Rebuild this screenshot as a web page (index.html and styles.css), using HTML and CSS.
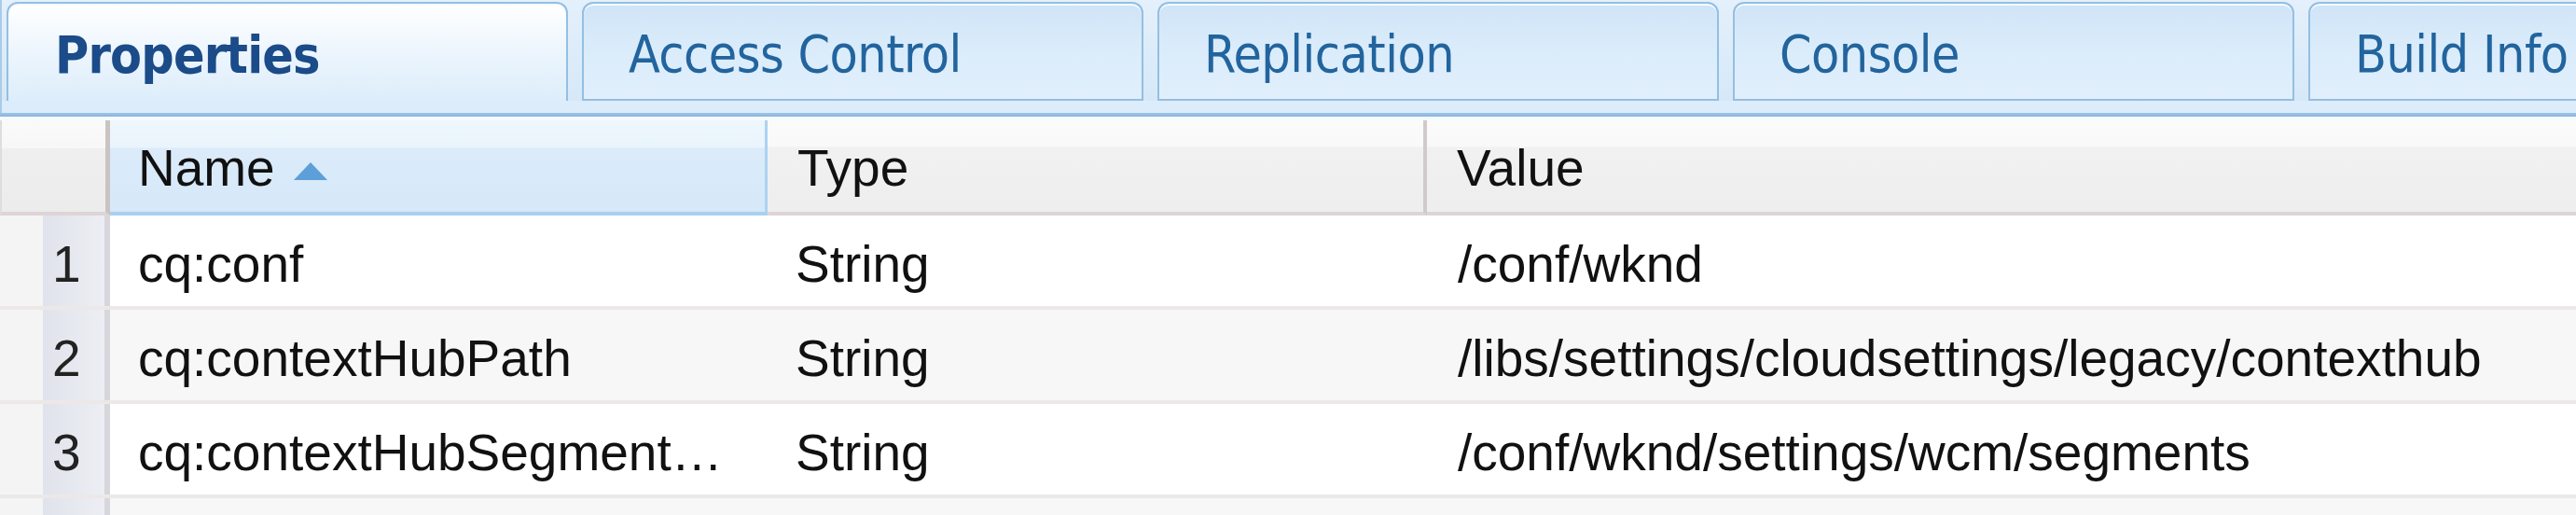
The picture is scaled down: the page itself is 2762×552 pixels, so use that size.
FILE: index.html
```html
<!DOCTYPE html>
<html>
<head>
<meta charset="utf-8">
<link rel="stylesheet" href="styles.css">
</head>
<body>
<div class="app">
  <div class="tabbar">
    <div class="tab active">Properties</div>
    <div class="tab">Access Control</div>
    <div class="tab">Replication</div>
    <div class="tab">Console</div>
    <div class="tab">Build Info</div>
  </div>
  <div class="band"></div>
  <div class="rule"></div>
  <div class="grid">
    <div class="hrow">
      <div class="hcell hnum"></div>
      <div class="hcell sorted">Name<span class="arrow"></span></div>
      <div class="hcell sep">Type</div>
      <div class="hcell">Value</div>
    </div>
    <div class="row">
      <div class="cell num">1</div>
      <div class="cell">cq:conf</div>
      <div class="cell">String</div>
      <div class="cell val">/conf/wknd</div>
    </div>
    <div class="row alt">
      <div class="cell num">2</div>
      <div class="cell">cq:contextHubPath</div>
      <div class="cell">String</div>
      <div class="cell val">/libs/settings/cloudsettings/legacy/contexthub</div>
    </div>
    <div class="row">
      <div class="cell num">3</div>
      <div class="cell">cq:contextHubSegment…</div>
      <div class="cell">String</div>
      <div class="cell val">/conf/wknd/settings/wcm/segments</div>
    </div>
    <div class="row alt">
      <div class="cell num"></div>
      <div class="cell"></div>
      <div class="cell"></div>
      <div class="cell val"></div>
    </div>
  </div>
</div>
</body>
</html>
```

FILE: styles.css
```css
html, body {
  margin: 0;
  padding: 0;
  background: #ffffff;
}

.app {
  width: 2762px;
  height: 552px;
  overflow: hidden;
}

.tabbar {
  display: flex;
  gap: 15px;
  padding: 2px 0 0 5px;
  height: 108px;
  box-sizing: border-box;
  background: linear-gradient(#e4f0fb, #d6e8f8);
  border-left: 2px solid #a9cbe8;
  overflow: hidden;
}

.tab {
  flex: 0 0 602px;
  box-sizing: border-box;
  height: 106px;
  border: 2px solid #94bfe3;
  border-radius: 12px 12px 0 0;
  background: linear-gradient(#cfe4f7 0%, #d9ebfa 40%, #e1effc 100%);
  padding-left: 48px;
  padding-top: 5px;
  display: flex;
  align-items: center;
  font-family: "DejaVu Sans Condensed", "DejaVu Sans", sans-serif;
  font-stretch: condensed;
  font-size: 55px;
  letter-spacing: -0.5px;
  color: #22649e;
  box-shadow: inset 0 2px 0 #f4faff;
}

.tab.active {
  height: 108px;
  border-bottom: none;
  background: linear-gradient(#ffffff 0%, #eef6fd 45%, #dcedfb 100%);
  color: #1b4b88;
  font-weight: bold;
  letter-spacing: -0.8px;
  padding-left: 50px;
  padding-top: 3px;
}

.band {
  height: 13px;
  background: #dcecfa;
  border-left: 2px solid #a9cbe8;
}

.rule {
  height: 4px;
  background: linear-gradient(#9ec6e8, #86b4dc);
  border-bottom: 4px solid #f6fafd;
}

.grid {
  font-family: "Liberation Sans", Arial, sans-serif;
  font-size: 55px;
  color: #111111;
}

.hrow,
.row {
  display: grid;
  grid-template-columns: 118px 705px 707px 1fr;
}

.hrow {
  height: 102px;
}

.hcell {
  box-sizing: border-box;
  display: flex;
  align-items: center;
  padding-left: 32px;
  padding-top: 4px;
  background: linear-gradient(#fbfbfb 0%, #f9f9f9 28%, #f1f1f1 30%, #eeeeee 92%);
  border-bottom: 4px solid #ddd5d5;
}

.hcell.hnum {
  padding: 0;
  background: linear-gradient(#fafafa 0%, #f7f7f7 30%, #efefef 31%, #ececec 100%);
  border-right: 5px solid #cbc3c3;
  border-left: 2px solid #e0dcdc;
}

.hcell.sorted {
  background: linear-gradient(#eef7fd 0%, #eaf4fc 29%, #dbebfa 31%, #d6e8f9 100%);
  border-right: 3px solid #acd2f1;
  border-bottom: 4px solid #a9d0f0;
  padding-left: 30px;
}

.hcell.sep {
  border-right: 4px solid #d2caca;
}

.arrow {
  width: 0;
  height: 0;
  margin-left: 20px;
  margin-top: 6px;
  border-left: 18px solid transparent;
  border-right: 18px solid transparent;
  border-bottom: 19px solid #5d9fd8;
}

.row {
  height: 101px;
  background: #ffffff;
}

.row.alt {
  background: #f7f7f7;
}

.cell {
  box-sizing: border-box;
  display: flex;
  align-items: center;
  padding-left: 30px;
  padding-top: 6px;
  white-space: nowrap;
  overflow: hidden;
  border-bottom: 4px solid #ece8e8;
}

.cell.val {
  padding-left: 33px;
}

.cell.num {
  padding-left: 56px;
  color: #222222;
  background: linear-gradient(to right, #f4f4f4 0, #f4f4f4 46px, #e0e3eb 46px, #eceef3 112px, #d6d6dc 112px, #d6d6dc 118px);
}
```
